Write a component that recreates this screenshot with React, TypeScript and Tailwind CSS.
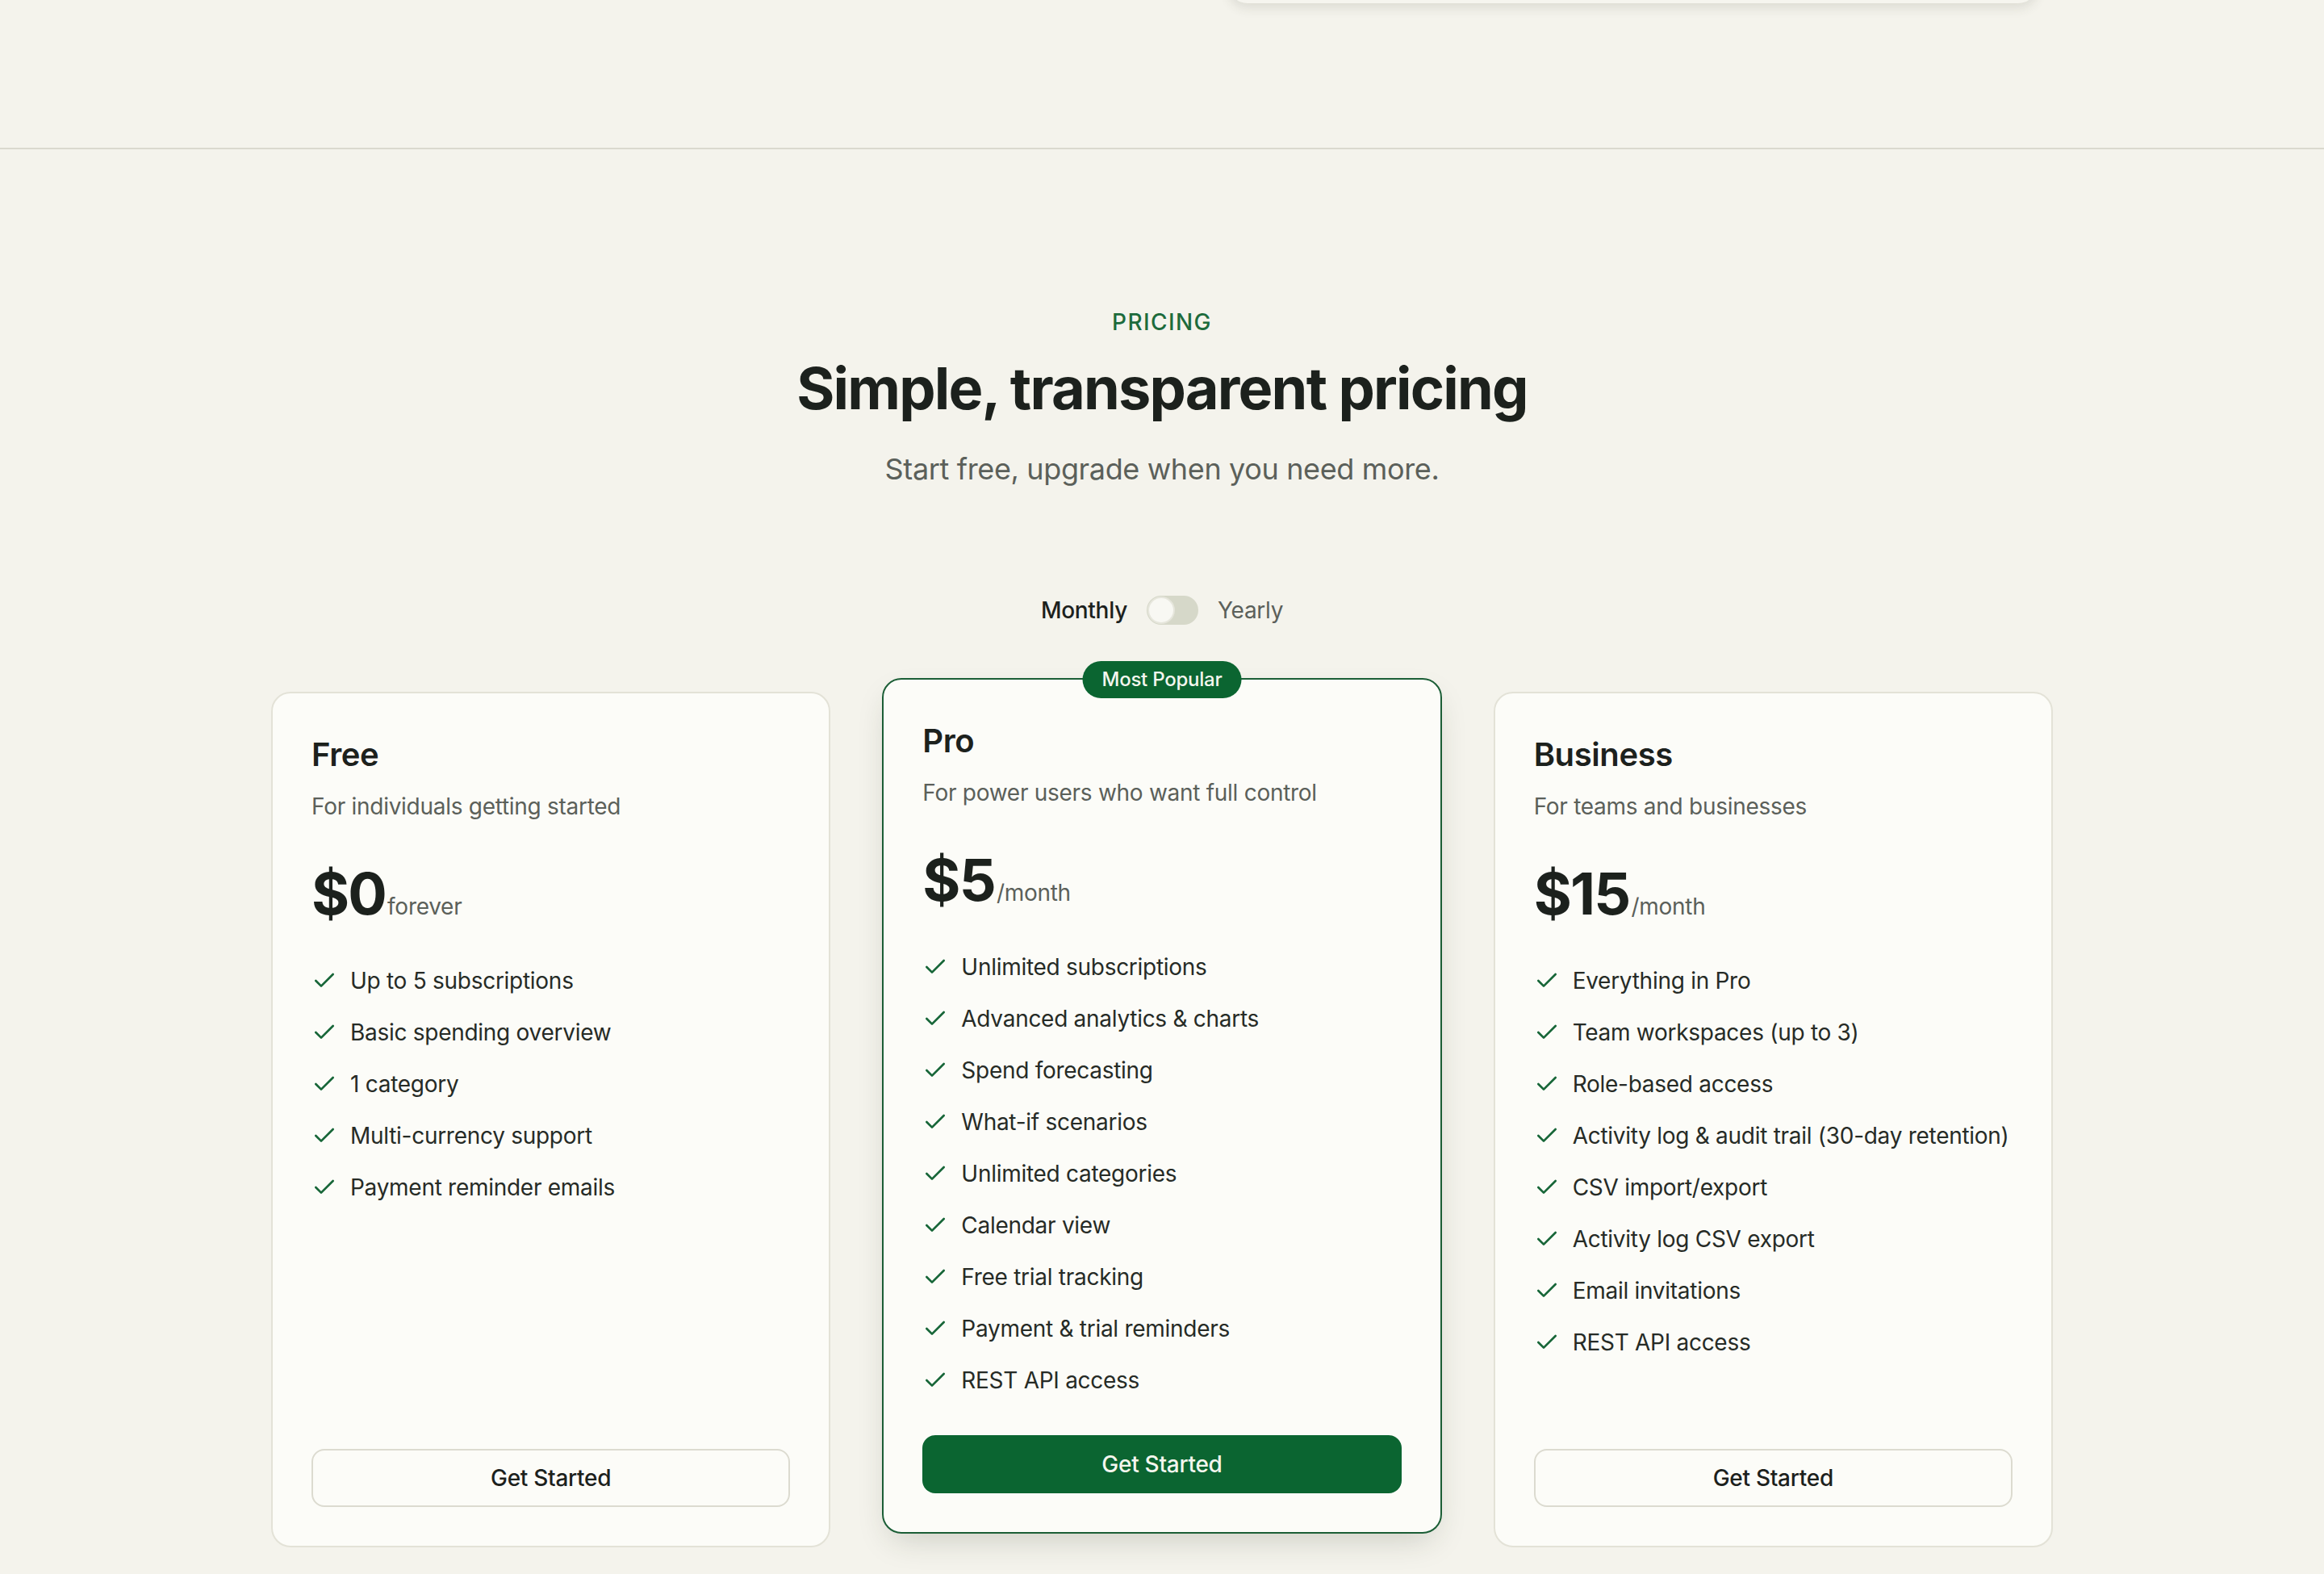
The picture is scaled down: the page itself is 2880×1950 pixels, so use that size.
import { Check } from "lucide-react";

type Plan = {
  name: string;
  description: string;
  price: string;
  period: string;
  features: string[];
  popular?: boolean;
};

const plans: Plan[] = [
  {
    name: "Free",
    description: "For individuals getting started",
    price: "$0",
    period: "forever",
    features: [
      "Up to 5 subscriptions",
      "Basic spending overview",
      "1 category",
      "Multi-currency support",
      "Payment reminder emails",
    ],
  },
  {
    name: "Pro",
    description: "For power users who want full control",
    price: "$5",
    period: "/month",
    popular: true,
    features: [
      "Unlimited subscriptions",
      "Advanced analytics & charts",
      "Spend forecasting",
      "What-if scenarios",
      "Unlimited categories",
      "Calendar view",
      "Free trial tracking",
      "Payment & trial reminders",
      "REST API access",
    ],
  },
  {
    name: "Business",
    description: "For teams and businesses",
    price: "$15",
    period: "/month",
    features: [
      "Everything in Pro",
      "Team workspaces (up to 3)",
      "Role-based access",
      "Activity log & audit trail (30-day retention)",
      "CSV import/export",
      "Activity log CSV export",
      "Email invitations",
      "REST API access",
    ],
  },
];

const PlanCard = ({ plan }: { plan: Plan }) => (
  <div
    className={
      plan.popular
        ? "relative flex flex-col rounded-[24px] border-2 border-[#1b5e36] bg-[#fcfcf8] p-[48px] -translate-y-[17px] shadow-[0_16px_40px_-12px_rgba(40,50,30,0.22)]"
        : "relative flex flex-col rounded-[24px] border-2 border-[#e3e2d7] bg-[#fcfcf8] p-[48px]"
    }
  >
    {plan.popular && (
      <div className="absolute left-1/2 top-0 -translate-x-1/2 -translate-y-1/2 rounded-full bg-[#0b6531] px-[24px] py-[7px] text-[24px] leading-[32px] font-medium tracking-[-0.01em] text-[#f4f6ee]">
        Most Popular
      </div>
    )}
    <h3 className="text-[40px] leading-[56px] font-semibold tracking-[-0.01em] text-[#1c211d]">{plan.name}</h3>
    <p className="mt-[16px] text-[28px] leading-[40px] tracking-[-0.01em] text-[#5b605a]">{plan.description}</p>
    <div className="mt-[48px] flex items-baseline gap-[2px]">
      <span className="text-[72px] leading-[80px] font-bold tracking-tight text-[#1c211d]">{plan.price}</span>
      <span className="text-[28px] leading-[40px] tracking-[-0.01em] text-[#5b605a]">{plan.period}</span>
    </div>
    <ul className="mt-[48px] flex flex-col gap-[24px]">
      {plan.features.map((f) => (
        <li
          key={f}
          className="flex items-center gap-[16px] whitespace-nowrap text-[28px] leading-[40px] tracking-[-0.01em] text-[#262b26]"
        >
          <Check className="h-[32px] w-[32px] shrink-0 text-[#176638]" strokeWidth={2} />
          <span>{f}</span>
        </li>
      ))}
    </ul>
    <div className="mt-auto pt-[48px]">
      {plan.popular ? (
        <button className="flex h-[72px] w-full items-center justify-center rounded-[16px] bg-[#0b6531] text-[28px] font-medium tracking-[-0.01em] text-[#f4f6ee]">
          Get Started
        </button>
      ) : (
        <button className="flex h-[72px] w-full items-center justify-center rounded-[16px] border-2 border-[#dcdbd0] bg-[#fcfcf8] text-[28px] font-medium tracking-[-0.01em] text-[#1c211d]">
          Get Started
        </button>
      )}
    </div>
  </div>
);

export default function App() {
  return (
    <div className="min-h-[1950px] bg-[#f4f3ec] font-['Inter','Noto_Sans',sans-serif] text-[#1c211d]">
      {/* end of hero above */}
      <div className="relative h-[185px] overflow-hidden border-b-2 border-[#dad9ce]">
        <div className="absolute left-[1522px] top-[-204px] h-[208px] w-[1003px] rounded-[24px] bg-[#f6f5ef] shadow-[0_6px_14px_rgba(60,60,40,0.12)]" />
      </div>

      <section className="pt-[194px] pb-[40px]">
        <div className="text-center">
          <p className="text-[28px] leading-[40px] font-medium uppercase tracking-wider text-[#1d6b3c]">Pricing</p>
          <h2 className="mt-[22px] text-[72px] leading-[80px] font-bold tracking-tight text-[#1c211d]">
            Simple, transparent pricing
          </h2>
          <p className="mt-[32px] text-[36px] leading-[56px] tracking-[-0.01em] text-[#5b605a]">
            Start free, upgrade when you need more.
          </p>
        </div>

        <div className="mt-[127px] flex items-center justify-center gap-[24px] text-[28px] leading-[40px] tracking-[-0.01em]">
          <span className="font-medium text-[#1c211d]">Monthly</span>
          <div className="flex h-[36px] w-[64px] items-center rounded-full bg-[#d6d8c9] px-[1px]">
            <div className="h-[34px] w-[34px] rounded-full border-2 border-[#e6e6dc] bg-[#f8f8f3]" />
          </div>
          <span className="text-[#5b605a]">Yearly</span>
        </div>

        <div className="mx-auto mt-[81px] grid w-[2208px] grid-cols-3 gap-[64px]">
          {plans.map((p) => (
            <PlanCard key={p.name} plan={p} />
          ))}
        </div>
      </section>
    </div>
  );
}
